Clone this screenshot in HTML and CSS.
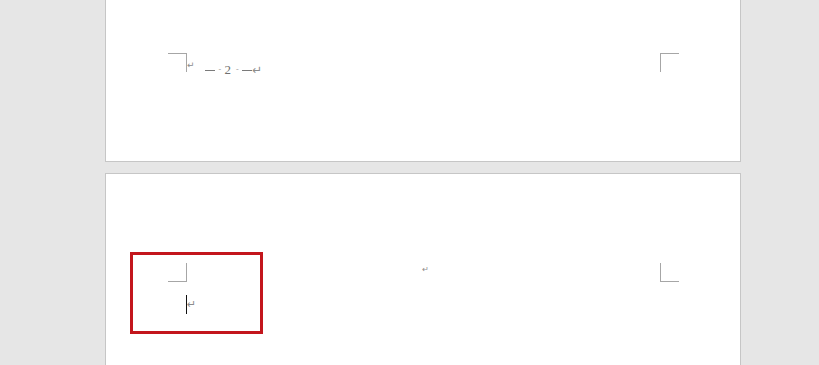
FILE: index.html
```html
<!DOCTYPE html>
<html lang="ja">
<head>
<meta charset="utf-8">
<title>Document</title>
<link rel="stylesheet" href="styles.css">
</head>
<body>
<div class="doc">
  <div class="page page-first">
    <div class="header-row">
      <div class="group">
        <span class="mark mark-tl"></span>
        <span class="para small">↵</span>
        <span class="footer-text"><span class="dash"></span><span class="dot">-</span><span class="num">2</span><span class="dot">-</span><span class="dash"></span><span class="para">↵</span></span>
      </div>
      <span class="mark mark-tr"></span>
    </div>
  </div>
  <div class="page page-second">
    <div class="top-row">
      <span class="mark mark-bl"></span>
      <span class="para center-para">↵</span>
      <span class="mark mark-br"></span>
    </div>
    <div class="body-line">
      <span class="caret"></span><span class="para">↵</span>
    </div>
    <div class="highlight"></div>
  </div>
</div>
</body>
</html>
```

FILE: styles.css
```css
html, body {
  margin: 0;
  padding: 0;
  background: #e6e6e6;
  height: 100%;
  overflow: hidden;
}
body {
  font-family: "Liberation Serif", "Noto Sans CJK JP", serif;
  color: #808080;
}
.doc {
  display: flex;
  flex-direction: column;
  gap: 11px;
  padding-left: 105px;
  width: 636px;
  margin-top: -40px;
}
.page {
  background: #ffffff;
  border: 1px solid #c6c6c6;
  box-sizing: border-box;
  width: 636px;
  position: relative;
}
.page-first {
  height: 202px;
  padding: 92px 61px 0 62px;
}
.page-second {
  height: 260px;
  padding: 89px 61px 0 62px;
}
.header-row, .top-row {
  display: flex;
  justify-content: space-between;
  align-items: flex-start;
}
.group {
  display: flex;
  align-items: flex-start;
}
.mark {
  display: block;
  width: 19px;
  height: 19px;
  box-sizing: border-box;
  border: 0 solid #a6a6a6;
}
.mark-tl { border-top-width: 1px; border-right-width: 1px; }
.mark-tr { border-top-width: 1px; border-left-width: 1px; }
.mark-bl { border-bottom-width: 1px; border-right-width: 1px; }
.mark-br { border-bottom-width: 1px; border-left-width: 1px; }
.para {
  font-family: "DejaVu Sans", sans-serif;
  font-size: 9px;
  line-height: 1;
  color: #8c8c8c;
}
.small {
  margin-top: 8px;
}
.footer-text {
  display: flex;
  align-items: center;
  margin-left: 10px;
  margin-top: 11px;
  height: 12px;
  color: #7a7a7a;
}
.dash {
  display: block;
  width: 10px;
  height: 1px;
  background: #7a7a7a;
  margin-top: 1px;
}
.dot {
  font-size: 8px;
  line-height: 12px;
  width: 4px;
  margin: 0 2px 0 4px;
  color: #a0a0a0;
}
.num {
  font-size: 13px;
  line-height: 12px;
  color: #707070;
  margin-right: 1px;
}
.footer-text .para {
  font-size: 12px;
  margin-left: 0;
}
.center-para {
  margin-top: 3px;
  font-size: 8px;
  margin-left: 4px;
}
.body-line {
  display: flex;
  align-items: center;
  margin-top: 13px;
  margin-left: 18px;
  height: 19px;
}
.caret {
  display: block;
  width: 1px;
  height: 19px;
  background: #111111;
}
.body-line .para {
  font-size: 11px;
}
.highlight {
  position: absolute;
  left: 24px;
  top: 78px;
  width: 133px;
  height: 82px;
  box-sizing: border-box;
  border: 3px solid #c3161c;
}
```
